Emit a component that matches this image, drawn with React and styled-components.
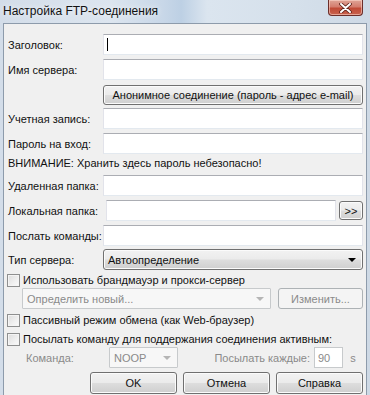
import React from "react";
import styled, { createGlobalStyle } from "styled-components";

const GlobalStyle = createGlobalStyle`
  html, body {
    margin: 0;
    padding: 0;
    background: #d3deea;
  }
  body {
    font-family: "Liberation Sans", Arial, sans-serif;
    font-size: 11px;
    color: #111;
  }
`;

const Window = styled.div`
  width: 370px;
  height: 395px;
  overflow: hidden;
  display: flex;
  flex-direction: column;
  background: linear-gradient(
    90deg,
    #d3dde9 0%,
    #dce5ef 30%,
    #c8d7e8 44%,
    #bdd0e4 49%,
    #dbe5ef 56%,
    #d5e0eb 80%,
    #ced9e5 100%
  );
`;

const TitleBar = styled.div`
  height: 23px;
  flex: none;
  display: flex;
  justify-content: space-between;
  align-items: flex-start;
  padding: 0 7px 0 3px;
`;

const Title = styled.div`
  font-size: 12px;
  line-height: 23px;
  color: #111;
  text-shadow: 0 0 6px rgba(255, 255, 255, 0.9);
`;

const CloseBtn = styled.div`
  width: 35px;
  height: 16px;
  box-sizing: border-box;
  border: 1px solid #6b2e2a;
  border-top: none;
  border-radius: 0 0 4px 4px;
  background: linear-gradient(#dfa496 0%, #d47d6e 45%, #c04a36 55%, #c8634f 100%);
  box-shadow: inset 0 0 0 1px rgba(255, 220, 210, 0.55);
  display: flex;
  justify-content: center;
  align-items: center;
`;

const Frame = styled.div`
  flex: 1;
  display: flex;
  padding: 0 3px;
`;

const Client = styled.div`
  flex: 1;
  display: flex;
  flex-direction: column;
  background: #f0f0f0;
  border: 1px solid #8d9bab;
  border-bottom: none;
  padding: 10px 3px 0 4px;
`;

const Row = styled.div`
  display: flex;
  align-items: center;
  height: ${(p) => p.$h || 21}px;
  margin-top: ${(p) => p.$top || 0}px;
  padding-left: ${(p) => p.$indent || 0}px;
  gap: ${(p) => p.$gap || 0}px;
  flex: none;
`;

const Label = styled.div`
  width: ${(p) => p.$w || 95}px;
  flex: none;
  white-space: nowrap;
  color: ${(p) => (p.$disabled ? "#8a8a8a" : "#111")};
  text-align: ${(p) => p.$align || "left"};
`;

const Field = styled.div`
  flex: ${(p) => (p.$w ? "none" : 1)};
  width: ${(p) => (p.$w ? `${p.$w}px` : "auto")};
  height: 100%;
  box-sizing: border-box;
  background: #fff;
  border: 1px solid #e2e3ea;
  border-top-color: #abadb3;
  border-bottom-color: #e3e9ef;
  display: flex;
  align-items: center;
  padding-left: 3px;
  color: ${(p) => (p.$disabled ? "#8a8a8a" : "#000")};
  ${(p) => p.$disabled && "border-color: #c7cacc;"}
`;

const Caret = styled.span`
  width: 1px;
  height: 13px;
  background: #000;
`;

const Button = styled.div`
  flex: ${(p) => (p.$w ? "none" : 1)};
  width: ${(p) => (p.$w ? `${p.$w}px` : "auto")};
  height: ${(p) => p.$h || 21}px;
  box-sizing: border-box;
  border: 1px solid ${(p) => (p.$disabled ? "#adb2b5" : "#707070")};
  border-radius: 3px;
  background: ${(p) =>
    p.$disabled
      ? "#f4f4f4"
      : "linear-gradient(#f2f2f2 0%, #ebebeb 48%, #dddddd 52%, #cfcfcf 100%)"};
  box-shadow: inset 0 0 0 1px ${(p) => (p.$disabled ? "#f4f4f4" : "#fbfbfb")};
  display: flex;
  align-items: center;
  justify-content: center;
  color: ${(p) => (p.$disabled ? "#8a8a8a" : "#111")};
  white-space: nowrap;
`;

const Combo = styled.div`
  flex: ${(p) => (p.$w ? "none" : 1)};
  width: ${(p) => (p.$w ? `${p.$w}px` : "auto")};
  height: 21px;
  box-sizing: border-box;
  border: 1px solid ${(p) => (p.$disabled ? "#c7cacc" : "#707070")};
  border-radius: ${(p) => (p.$disabled ? 1 : 3)}px;
  background: ${(p) =>
    p.$disabled
      ? "#f7f7f7"
      : "linear-gradient(#f2f2f2 0%, #ebebeb 48%, #dddddd 52%, #cfcfcf 100%)"};
  box-shadow: inset 0 0 0 1px ${(p) => (p.$disabled ? "#f7f7f7" : "#fbfbfb")};
  display: flex;
  align-items: center;
  justify-content: space-between;
  padding: 0 6px 0 4px;
  color: ${(p) => (p.$disabled ? "#8a8a8a" : "#111")};
`;

const Arrow = styled.span`
  width: 0;
  height: 0;
  border-left: 4px solid transparent;
  border-right: 4px solid transparent;
  border-top: 4px solid ${(p) => (p.$disabled ? "#b5b5b5" : "#000")};
`;

const Warning = styled.div`
  height: 14px;
  line-height: 14px;
  margin-top: 2px;
  flex: none;
`;

const CheckRow = styled.div`
  display: flex;
  align-items: center;
  height: 14px;
  margin-top: ${(p) => p.$top || 0}px;
  margin-left: -1px;
  gap: 3px;
  flex: none;
  white-space: nowrap;
`;

const Box = styled.span`
  width: 13px;
  height: 13px;
  box-sizing: border-box;
  border: 1px solid #8e8f8f;
  background: linear-gradient(135deg, #dcdcdc 0%, #f0f0f0 60%, #fbfbfb 100%);
  box-shadow: inset 0 0 0 1px #f4f4f4;
  flex: none;
`;

const Spacer = styled.div`
  flex: 1;
`;

const Footer = styled.div`
  display: flex;
  justify-content: flex-end;
  gap: 6px;
  margin-top: 4px;
  flex: none;
`;

export default function App() {
  return (
    <>
      <GlobalStyle />
      <Window>
        <TitleBar>
          <Title>Настройка FTP-соединения</Title>
          <CloseBtn>
            <svg width="13" height="10" viewBox="0 0 13 10">
              <path
                d="M2 1 L11 9 M11 1 L2 9"
                stroke="#5a1f17"
                strokeWidth="3.6"
                strokeLinecap="round"
              />
              <path
                d="M2 1 L11 9 M11 1 L2 9"
                stroke="#fff"
                strokeWidth="2"
                strokeLinecap="round"
              />
            </svg>
          </CloseBtn>
        </TitleBar>
        <Frame>
          <Client>
            <Row>
              <Label>Заголовок:</Label>
              <Field>
                <Caret />
              </Field>
            </Row>
            <Row $top={4}>
              <Label>Имя сервера:</Label>
              <Field />
            </Row>
            <Row $top={5} $h={20}>
              <Label />
              <Button $h={20}>Анонимное соединение (пароль - адрес e-mail)</Button>
            </Row>
            <Row $top={3}>
              <Label>Учетная запись:</Label>
              <Field />
            </Row>
            <Row $top={4}>
              <Label>Пароль на вход:</Label>
              <Field />
            </Row>
            <Warning>ВНИМАНИЕ: Хранить здесь пароль небезопасно!</Warning>
            <Row $top={5}>
              <Label>Удаленная папка:</Label>
              <Field />
            </Row>
            <Row $top={4} $gap={3}>
              <Label>Локальная папка:</Label>
              <Field />
              <Button $w={24} $h={19}>&gt;&gt;</Button>
            </Row>
            <Row $top={4}>
              <Label>Послать команды:</Label>
              <Field />
            </Row>
            <Row $top={3}>
              <Label>Тип сервера:</Label>
              <Combo>
                Автоопределение
                <Arrow />
              </Combo>
            </Row>
            <CheckRow $top={3}>
              <Box />
              Использовать брандмауэр и прокси-сервер
            </CheckRow>
            <Row $top={1} $indent={14} $gap={7}>
              <Combo $disabled>
                Определить новый...
                <Arrow $disabled />
              </Combo>
              <Button $w={85} $disabled>
                Изменить...
              </Button>
            </Row>
            <CheckRow $top={4}>
              <Box />
              Пассивный режим обмена (как Web-браузер)
            </CheckRow>
            <CheckRow $top={5}>
              <Box />
              Посылать команду для поддержания соединения активным:
            </CheckRow>
            <Row $top={1} $indent={18}>
              <Label $w={83} $disabled>
                Команда:
              </Label>
              <Combo $w={69} $disabled>
                NOOP
                <Arrow $disabled />
              </Combo>
              <Spacer />
              <Label $w={120} $align="right" $disabled>
                Посылать каждые:
              </Label>
              <Field $w={29} $disabled style={{ marginLeft: 4 }}>
                90
              </Field>
              <Label $w={20} $align="center" $disabled>
                s
              </Label>
            </Row>
            <Footer>
              <Button $w={87} $h={22}>OK</Button>
              <Button $w={87} $h={22}>Отмена</Button>
              <Button $w={87} $h={22}>Справка</Button>
            </Footer>
          </Client>
        </Frame>
      </Window>
    </>
  );
}
